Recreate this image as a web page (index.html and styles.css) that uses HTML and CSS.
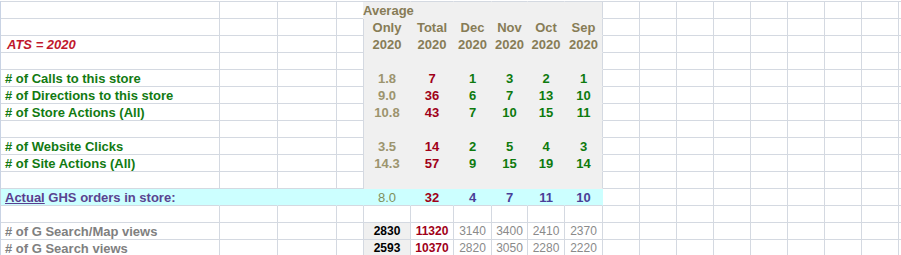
FILE: index.html
```html
<!DOCTYPE html>
<html>
<head>
<meta charset="utf-8">
<link rel="stylesheet" href="styles.css">
</head>
<body>
<div class="sheet">
  <div class="r r0">
    <div class="c"></div><div class="c"></div><div class="c"></div><div class="c"></div>
    <div class="c g hd avg">Average</div><div class="c g"></div><div class="c g"></div><div class="c g"></div><div class="c g"></div><div class="c g last"></div>
    <div class="c f"></div>
  </div>
  <div class="r">
    <div class="c"></div><div class="c"></div><div class="c"></div><div class="c"></div>
    <div class="c g hd">Only</div><div class="c g hd">Total</div><div class="c g hd">Dec</div><div class="c g hd">Nov</div><div class="c g hd">Oct</div><div class="c g hd last">Sep</div>
    <div class="c f"></div>
  </div>
  <div class="r">
    <div class="c lab ats">ATS = 2020</div><div class="c"></div><div class="c"></div><div class="c"></div>
    <div class="c g hd">2020</div><div class="c g hd">2020</div><div class="c g hd">2020</div><div class="c g hd">2020</div><div class="c g hd">2020</div><div class="c g hd last">2020</div>
    <div class="c f"></div>
  </div>
  <div class="r">
    <div class="c"></div><div class="c"></div><div class="c"></div><div class="c"></div>
    <div class="c g"></div><div class="c g"></div><div class="c g"></div><div class="c g"></div><div class="c g"></div><div class="c g last"></div>
    <div class="c f"></div>
  </div>
  <div class="r">
    <div class="c lab grn"># of Calls to this store</div><div class="c"></div><div class="c"></div><div class="c"></div>
    <div class="c g av">1.8</div><div class="c g tot">7</div><div class="c g mo">1</div><div class="c g mo">3</div><div class="c g mo">2</div><div class="c g mo last">1</div>
    <div class="c f"></div>
  </div>
  <div class="r">
    <div class="c lab grn"># of Directions to this store</div><div class="c"></div><div class="c"></div><div class="c"></div>
    <div class="c g av">9.0</div><div class="c g tot">36</div><div class="c g mo">6</div><div class="c g mo">7</div><div class="c g mo">13</div><div class="c g mo last">10</div>
    <div class="c f"></div>
  </div>
  <div class="r">
    <div class="c lab grn"># of Store Actions (All)</div><div class="c"></div><div class="c"></div><div class="c"></div>
    <div class="c g av">10.8</div><div class="c g tot">43</div><div class="c g mo">7</div><div class="c g mo">10</div><div class="c g mo">15</div><div class="c g mo last">11</div>
    <div class="c f"></div>
  </div>
  <div class="r">
    <div class="c"></div><div class="c"></div><div class="c"></div><div class="c"></div>
    <div class="c g"></div><div class="c g"></div><div class="c g"></div><div class="c g"></div><div class="c g"></div><div class="c g last"></div>
    <div class="c f"></div>
  </div>
  <div class="r">
    <div class="c lab grn"># of Website Clicks</div><div class="c"></div><div class="c"></div><div class="c"></div>
    <div class="c g av">3.5</div><div class="c g tot">14</div><div class="c g mo">2</div><div class="c g mo">5</div><div class="c g mo">4</div><div class="c g mo last">3</div>
    <div class="c f"></div>
  </div>
  <div class="r">
    <div class="c lab grn"># of Site Actions (All)</div><div class="c"></div><div class="c"></div><div class="c"></div>
    <div class="c g av">14.3</div><div class="c g tot">57</div><div class="c g mo">9</div><div class="c g mo">15</div><div class="c g mo">19</div><div class="c g mo last">14</div>
    <div class="c f"></div>
  </div>
  <div class="r">
    <div class="c"></div><div class="c"></div><div class="c"></div><div class="c"></div>
    <div class="c g"></div><div class="c g"></div><div class="c g"></div><div class="c g"></div><div class="c g"></div><div class="c g last"></div>
    <div class="c f"></div>
  </div>
  <div class="r cy">
    <div class="c lab pur"><span class="u">Actual</span> GHS orders in store:</div><div class="c"></div><div class="c"></div><div class="c"></div>
    <div class="c av2">8.0</div><div class="c tot">32</div><div class="c ind">4</div><div class="c ind">7</div><div class="c ind">11</div><div class="c ind">10</div>
    <div class="c f"></div>
  </div>
  <div class="r">
    <div class="c"></div><div class="c"></div><div class="c"></div><div class="c"></div>
    <div class="c"></div><div class="c"></div><div class="c"></div><div class="c"></div><div class="c"></div><div class="c"></div>
    <div class="c f"></div>
  </div>
  <div class="r sm">
    <div class="c lab gry"># of G Search/Map views</div><div class="c"></div><div class="c"></div><div class="c"></div>
    <div class="c lg blk">2830</div><div class="c tot">11320</div><div class="c gn">3140</div><div class="c gn">3400</div><div class="c gn">2410</div><div class="c gn">2370</div>
    <div class="c f"></div>
  </div>
  <div class="r sm">
    <div class="c lab gry"># of G Search views</div><div class="c"></div><div class="c"></div><div class="c"></div>
    <div class="c lg blk">2593</div><div class="c tot">10370</div><div class="c gn">2820</div><div class="c gn">3050</div><div class="c gn">2280</div><div class="c gn">2220</div>
    <div class="c f"></div>
  </div>
</div>
</body>
</html>
```

FILE: styles.css
```css
body {
  margin: 0;
  background: #ffffff;
  font: bold 13px "Liberation Sans", Arial, sans-serif;
}

.sheet {
  margin-top: 1px;
  border-left: 1px solid #c9d3e4;
  overflow: hidden;
}

.r {
  display: grid;
  grid-template-columns: 219px 58px 59px 27px 47px 43px 38px 36px 37px 38px 1fr;
}

.c {
  box-sizing: border-box;
  height: 17px;
  line-height: 17px;
  border-right: 1px solid #d4d9e1;
  border-bottom: 1px solid #d4d9e1;
  text-align: center;
  white-space: nowrap;
}

.r0 .c {
  height: 18px;
  border-top: 1px solid #d4d9e1;
}

.g {
  background: #f0f0f0;
  border-color: #f0f0f0;
}

.g.last {
  border-right-color: #d4d9e1;
}

.f {
  border-right: none;
  background-image: repeating-linear-gradient(to right, transparent 0 36px, #d4d9e1 36px 37px);
}

.cy .c {
  background-color: #ccffff;
  border-right-color: #ccffff;
}

.cy .c.f {
  background-color: #ffffff;
  border-right: none;
}

.lab {
  text-align: left;
  padding-left: 4px;
  overflow: visible;
}

.ats {
  color: #c0182c;
  font-style: italic;
  padding-left: 6px;
}

.grn { color: #127a12; }
.gry { color: #808080; }
.pur { color: #5a4490; }
.u { text-decoration: underline; color: #5a3c8e; }

.hd { color: #877c56; }
.avg {
  position: relative;
  z-index: 1;
  text-align: left;
  padding-left: 0;
  margin-left: -1px;
  overflow: visible;
}

.av { color: #9c946e; }
.av2 { color: #7f8f5a; font-weight: normal; }
.tot { color: #a00018; }
.mo { color: #0e7a0e; }
.ind { color: #4a3e98; }

.sm .c:not(.lab) {
  font-size: 12px;
}

.lg {
  background: #f0f0f0;
}
.blk { color: #000000; }
.gn { color: #8a8a8a; font-weight: normal; }
```
